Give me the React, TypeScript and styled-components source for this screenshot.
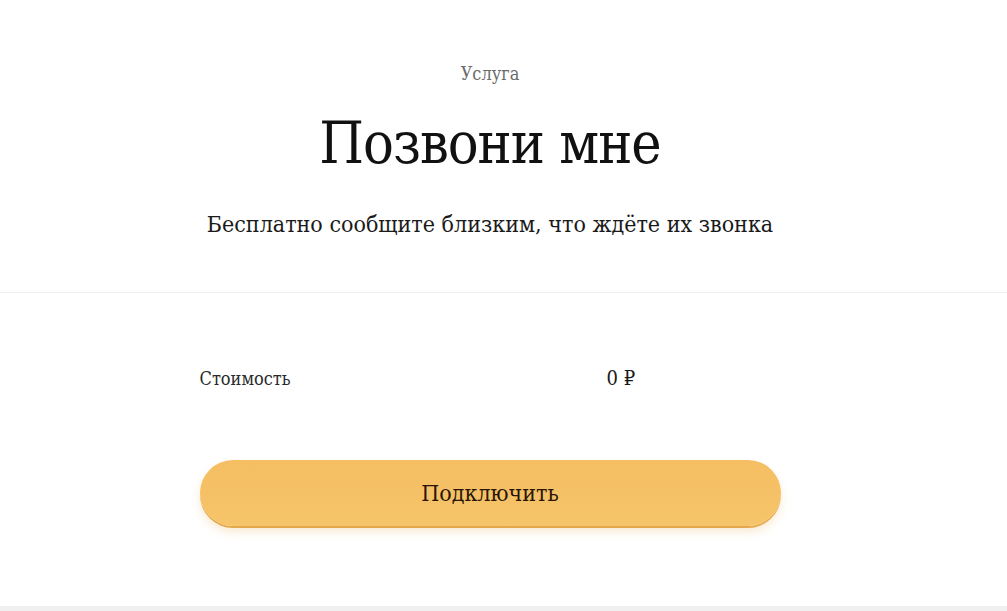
import styled, { createGlobalStyle } from 'styled-components';

const GlobalStyle = createGlobalStyle`
  html, body {
    margin: 0;
    padding: 0;
    background: #ffffff;
  }
  body {
    font-family: "DejaVu Serif Condensed", "DejaVu Serif", "Liberation Serif", serif;
    color: #1a1a1a;
  }
`;

const App = () => {
  return (
    <Page>
      <GlobalStyle />
      <Header>
        <Kicker>Услуга</Kicker>
        <Title>Позвони мне</Title>
        <Lead>Бесплатно сообщите близким, что ждёте их звонка</Lead>
      </Header>
      <Body>
        <PriceRow>
          <Label>Стоимость</Label>
          <Value>0 ₽</Value>
        </PriceRow>
        <ConnectBtn type="button">Подключить</ConnectBtn>
      </Body>
      <Footer />
    </Page>
  );
};

export default App;

const Page = styled.div`
  display: flex;
  flex-direction: column;
  min-height: 611px;
`;

const Header = styled.header`
  display: flex;
  flex-direction: column;
  align-items: center;
  padding: 63px 27px 0 0;
  height: 293px;
  box-sizing: border-box;
  border-bottom: 1px solid #ededed;
`;

const Kicker = styled.div`
  font-size: 18px;
  color: #6b6b6b;
  line-height: 22px;
`;

const Title = styled.h1`
  margin: 23px 0 0;
  font-size: 57px;
  font-weight: normal;
  line-height: 70px;
  letter-spacing: -1px;
  color: #111;
`;

const Lead = styled.p`
  margin: 32px 0 0;
  font-size: 23px;
  line-height: 28px;
  color: #1a1a1a;
`;

const Body = styled.main`
  flex: 1;
  padding: 72px 27px 0 0;
  display: flex;
  flex-direction: column;
  align-items: center;
`;

const PriceRow = styled.div`
  width: 581px;
  display: grid;
  grid-template-columns: 407px auto;
  align-items: center;
  height: 26px;
`;

const Label = styled.span`
  font-size: 18px;
  color: #2a2a2a;
`;

const Value = styled.span`
  font-size: 20px;
  color: #1a1a1a;
`;

const ConnectBtn = styled.button`
  display: block;
  width: 581px;
  height: 66px;
  margin-top: 69px;
  border: none;
  border-radius: 33px;
  background: linear-gradient(#f5be62, #f6c46a);
  box-shadow: 0 2px 0 #e6a84c, 0 6px 10px rgba(230, 170, 80, 0.25);
  font-family: "DejaVu Serif Condensed", "DejaVu Serif", "Liberation Serif", serif;
  font-size: 23px;
  color: #2a1608;
  cursor: pointer;
`;

const Footer = styled.div`
  height: 5px;
  background: #f0f0f0;
`;
